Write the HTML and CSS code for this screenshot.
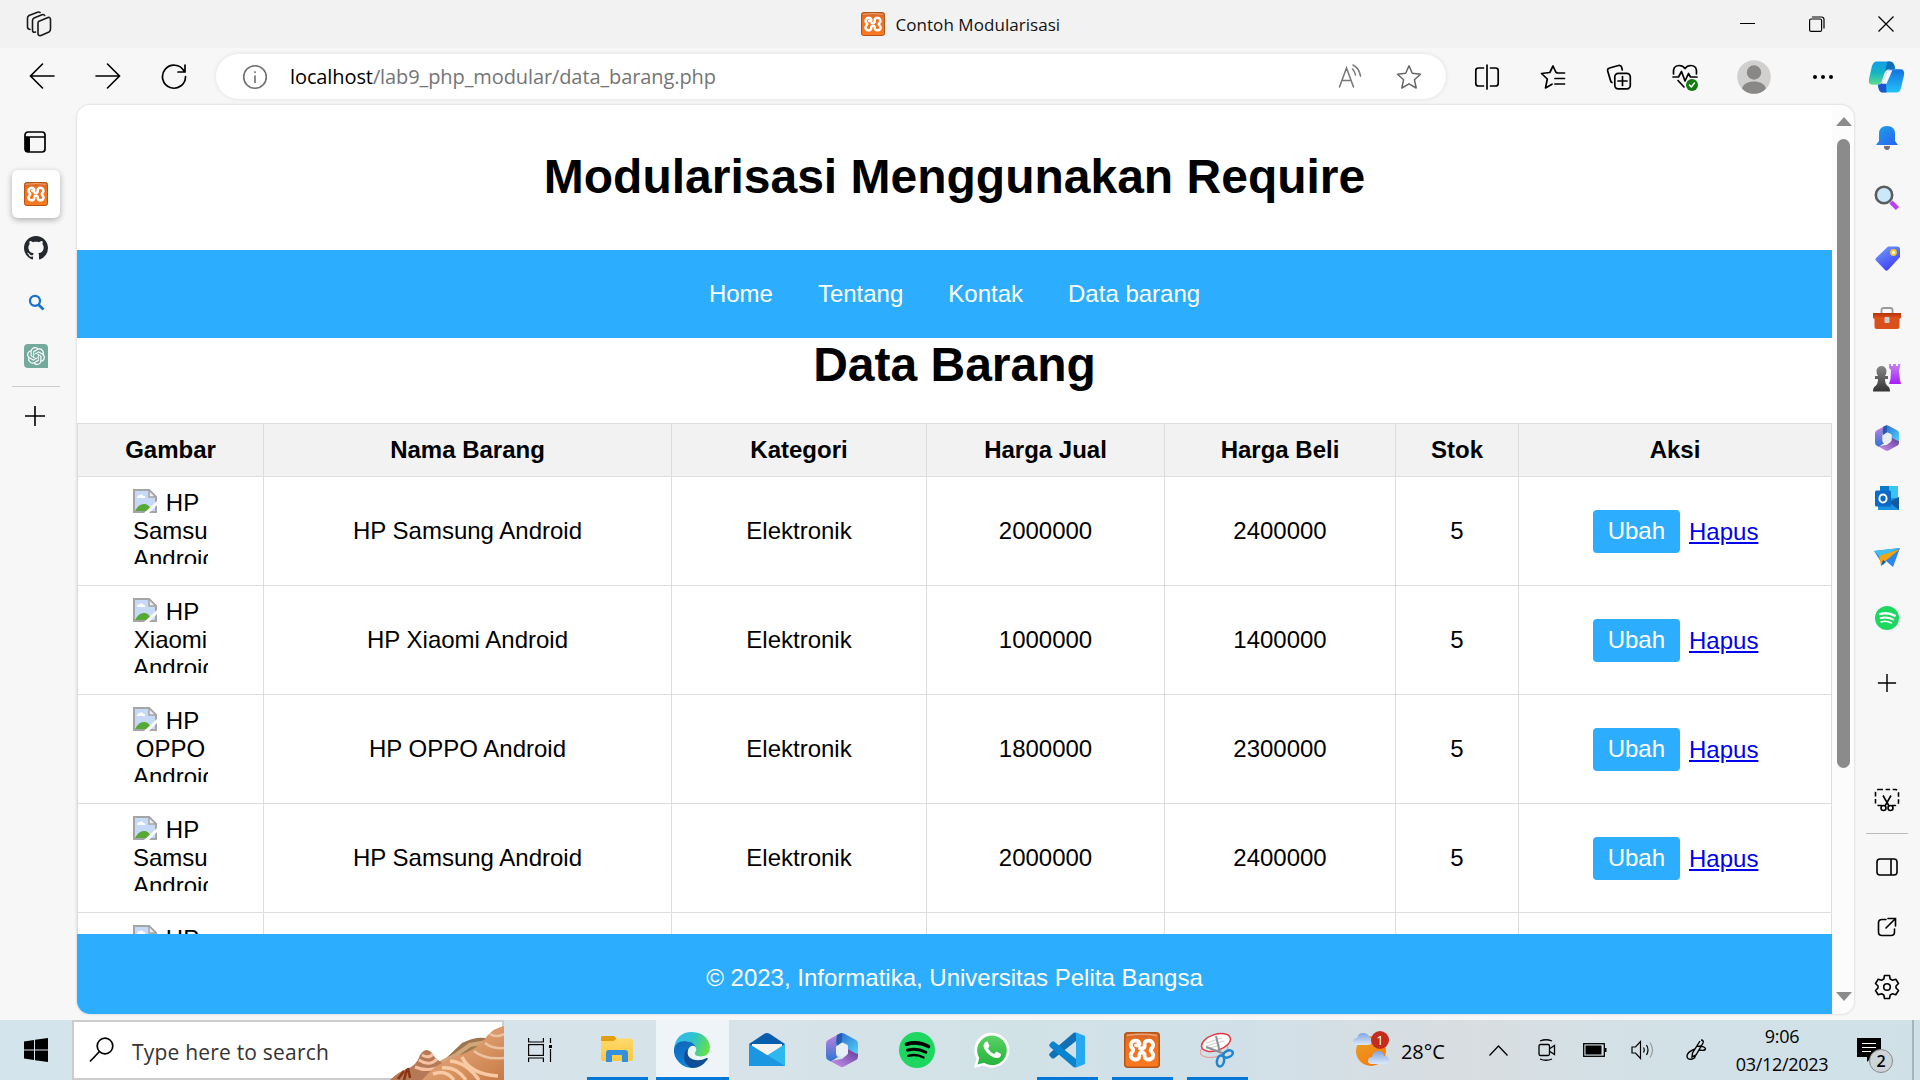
FILE: index.html
```html
<!DOCTYPE html>
<html lang="id">
<head>
<meta charset="utf-8">
<title>Contoh Modularisasi</title>
<link rel="stylesheet" href="styles.css">
</head>
<body>
<svg class="defs" width="0" height="0" aria-hidden="true">
  <defs>
    <linearGradient id="gBlue" x1="0" y1="0" x2="1" y2="1"><stop offset="0" stop-color="#1aa3e8"/><stop offset="1" stop-color="#2b61f0"/></linearGradient>
    <linearGradient id="gTag" x1="0" y1="0" x2=".6" y2="1"><stop offset="0" stop-color="#74a4fb"/><stop offset="1" stop-color="#3e3df5"/></linearGradient>
    <linearGradient id="gPurple" x1="0" y1="0" x2="0" y2="1"><stop offset="0" stop-color="#c583f5"/><stop offset="1" stop-color="#a61cf8"/></linearGradient>
    <linearGradient id="gGrey" x1="0" y1="0" x2="0" y2="1"><stop offset="0" stop-color="#888"/><stop offset="1" stop-color="#333"/></linearGradient>
    <linearGradient id="gBox" x1="0" y1="0" x2="0" y2="1"><stop offset="0" stop-color="#b53309"/><stop offset="1" stop-color="#e2581c"/></linearGradient>
    <linearGradient id="gXampp" x1="0" y1="0" x2="0" y2="1"><stop offset="0" stop-color="#d0682c"/><stop offset=".3" stop-color="#f0701e"/><stop offset="1" stop-color="#fa7a20"/></linearGradient>
    <linearGradient id="gEdgeA" x1="0" y1=".2" x2="1" y2=".5"><stop offset="0" stop-color="#35b9f0"/><stop offset=".5" stop-color="#2cc3d0"/><stop offset="1" stop-color="#66e04b"/></linearGradient>
    <linearGradient id="gEdgeB" x1="0" y1="0" x2=".4" y2="1"><stop offset="0" stop-color="#1263b4"/><stop offset="1" stop-color="#0a86df"/></linearGradient>
    <linearGradient id="gCopA" x1="0" y1="0" x2="0" y2="1"><stop offset="0" stop-color="#0f9ee8"/><stop offset=".5" stop-color="#15b5c5"/><stop offset="1" stop-color="#60dd8c"/></linearGradient>
    <linearGradient id="gCopB" x1="0" y1="0" x2="0" y2="1"><stop offset="0" stop-color="#1671de"/><stop offset="1" stop-color="#22c4fa"/></linearGradient>
    <linearGradient id="gFolder" x1="0" y1="0" x2="0" y2="1"><stop offset="0" stop-color="#ffd96b"/><stop offset="1" stop-color="#fcc740"/></linearGradient>
    <linearGradient id="gWa" x1="0" y1="0" x2="0" y2="1"><stop offset="0" stop-color="#5bd165"/><stop offset="1" stop-color="#25b43c"/></linearGradient>
    <linearGradient id="gMA" x1="0" y1="0" x2="0" y2="1"><stop offset="0" stop-color="#c17fe0"/><stop offset="1" stop-color="#2b76d2"/></linearGradient>
    <linearGradient id="gMB" x1="0" y1="0" x2="1" y2="1"><stop offset="0" stop-color="#2c62cf"/><stop offset="1" stop-color="#4fd9fb"/></linearGradient>
    <linearGradient id="gMC" x1="1" y1="0" x2="0" y2="1"><stop offset="0" stop-color="#5d3b95"/><stop offset="1" stop-color="#ce94f3"/></linearGradient>
    <linearGradient id="gSand" x1="0" y1="0" x2="1" y2="1"><stop offset="0" stop-color="#b57a55"/><stop offset=".5" stop-color="#dc9a6a"/><stop offset="1" stop-color="#c77b46"/></linearGradient>
    <linearGradient id="gSun" x1="0" y1="0" x2=".5" y2="1"><stop offset="0" stop-color="#e3a52c"/><stop offset="1" stop-color="#f97d0c"/></linearGradient>
    <linearGradient id="gCloud" x1="0" y1="0" x2="0" y2="1"><stop offset="0" stop-color="#80a5e2"/><stop offset="1" stop-color="#dbe8fa"/></linearGradient>

    <symbol id="xampp" viewBox="0 0 36 36">
      <rect x=".75" y=".75" width="34.500" height="34.500" rx="3" fill="url(#gXampp)" stroke="#b35516" stroke-width="1.500"/>
      <path d="M3 3.500Q18 1 33 3.500" fill="none" stroke="#e8a47a" stroke-width="1.500"/>
      <path d="M12 13.300H14.500C16.500 13 15.500 8.700 11.500 8.700C8 8.700 6.600 11.500 7 14C7.300 16.200 9.300 16.500 9.300 18C9.300 19.500 7 20.500 6.800 23C6.600 29 15.300 28.500 15.300 24.500C15.300 21 16 20.500 18 20.500C20 20.500 20.700 21 20.700 24.500C20.700 28.500 29.400 29 29.200 23C29 20.500 26.700 19.500 26.700 18C26.700 16.500 28.700 16.200 29 14C29.400 11.500 28 8.700 24.500 8.700C20 8.700 20.500 12 20.700 13.500C20.700 15.500 20 16.300 18 16.500H16" fill="none" stroke="#fff" stroke-width="3.800" stroke-linejoin="round" stroke-linecap="round"/>
    </symbol>
    <symbol id="m365" viewBox="0 0 32 34">
      <path d="M11 2L2 7Q0 8 0 11V23Q0 26 2 27L5 28.500L12 24Q10 23 10 20V13Z" fill="url(#gMA)"/>
      <path d="M11 2L14 .5Q16-.5 18 .5L30 7Q32 8 32 11V22L22 16V13Q22 12 20 11L16 9.500L11 13Q10 9 11 2Z" fill="url(#gMB)"/>
      <path d="M32 21V23Q32 26 30 27L18 33.500Q16 34.500 14 33.500L4 28L16 26L21 22Q22 21 22 16L29 20Z" fill="url(#gMC)"/>
      <path d="M11 2Q9 9 10.500 14L16 10V0Q13 .5 11 2Z" fill="#174a9c" opacity=".6"/>
      <path d="M16 9.500L22 13V20.500L16 24.500L10.200 21V13.500Z" fill="#e8eef5"/>
    </symbol>
    <symbol id="spot" viewBox="0 0 36 36">
      <circle cx="18" cy="18" r="18" fill="#1ed760"/>
      <g fill="none" stroke="currentColor" stroke-linecap="round"><path d="M7.500 12.200Q19 8.800 29.500 14.500" stroke-width="3.600"/><path d="M8.500 18.200Q18 15.500 26.800 20.200" stroke-width="3"/><path d="M9.300 23.800Q17.500 21.500 24.600 25.500" stroke-width="2.400"/></g>
    </symbol>
    <symbol id="broken" viewBox="0 0 24 24">
      <path d="M1 1H16L23 8V23H1Z" fill="#c6d9f6" stroke="#a5a5a5" stroke-width="2"/>
      <path d="M16 1V8H23Z" fill="#eee" stroke="#a5a5a5" stroke-width="1.500"/>
      <path d="M4 9Q4 6 7 6Q9 4 10.500 7Q13 7 12 9Z" fill="#fff"/>
      <path d="M2 22Q6 14 12 15Q17 16 18 22Z" fill="#57a936"/>
      <path d="M11 24L24 12V16L16 24Z" fill="#fff"/>
    </symbol>
    <symbol id="plus" viewBox="0 0 22 22"><path d="M11 1V21M1 11H21" stroke="#000" stroke-width="1.600"/></symbol>
  </defs>
</svg>

<div class="screen">
  <header class="titlebar">
    <svg class="work" width="26" height="26" viewBox="0 0 26 26" fill="none" stroke="#1a1a1a" stroke-width="1.600" stroke-linejoin="round" stroke-linecap="round"><path d="M12.500 10.500L22 6.500Q24.500 6 24.500 8.500V18Q24.500 20 23 21L15 24.500Q12 25 12 22.500V12Q12 11 12.500 10.500Z"/><path d="M9.500 21Q6.500 22 6.500 19V9.500Q6.500 8 8 7L16 3.700Q18 3 18.700 4.500M4 18.500Q1.500 18 1.500 16V7Q1.500 5.500 3 4.500L11.500 1.200Q13 .8 14 1.500"/></svg>
    <div class="tabtitle"><svg width="24" height="24"><use href="#xampp"/></svg><span>Contoh Modularisasi</span></div>
    <div class="winbtns">
      <svg width="16" height="16"><path d="M0 7.500H15" stroke="#000"/></svg>
      <svg width="16" height="16" fill="none" stroke="#000" stroke-width="1.200"><rect x=".6" y="3" width="12" height="12.400" rx="1.500"/><path d="M3 1H12.500Q15 1 15 3.500V12.500"/></svg>
      <svg width="16" height="16"><path d="M.5.5L15.500 15.500M15.500.5L.5 15.500" stroke="#000" stroke-width="1.200"/></svg>
    </div>
  </header>

  <div class="toolbar">
    <span class="tool"><svg width="26" height="28" viewBox="0 0 26 28" fill="none" stroke="#000" stroke-width="1.600" stroke-linecap="round"><path d="M25 13H2M13.500 1L1.500 13L13.500 25"/></svg></span>
    <span class="tool"><svg width="26" height="28" viewBox="0 0 26 28" fill="none" stroke="#000" stroke-width="1.600" stroke-linecap="round"><path d="M1 13H24M12.500 1L24.500 13L12.500 25"/></svg></span>
    <span class="tool"><svg width="26" height="26" viewBox="0 0 26 26" fill="none" stroke="#000" stroke-width="1.700" stroke-linecap="round"><path d="M23 7A11.500 11.500 0 1 0 24.500 12.500M24 1V8H17"/></svg></span>
    <div class="omnibox">
      <svg width="26" height="26" viewBox="0 0 26 26" fill="none" stroke="#6f6f6f" stroke-width="1.600"><circle cx="13" cy="13" r="11.300"/><path d="M13 11.500V19M13 7.200V9" /></svg>
      <span class="url"><b>localhost</b>/lab9_php_modular/data_barang.php</span>
      <svg width="24" height="26" viewBox="0 0 24 26" fill="none" stroke="#777" stroke-width="1.500" stroke-linecap="round"><path d="M1.500 23L8.500 4L15.500 23M4 16.500H13M14.500 5Q17 7.500 17.500 11M15 1Q21 4 22.500 12"/></svg>
      <svg class="star" width="26" height="26" viewBox="0 0 26 26" fill="none" stroke="#666" stroke-width="1.500" stroke-linejoin="round"><path d="M13 1.800L16.300 9.300L24.500 10.200L18.400 15.700L20.200 24L13 19.800L5.800 24L7.600 15.700L1.500 10.200L9.700 9.300Z"/></svg>
    </div>
    <span class="tool tool-first"><svg width="26" height="26" viewBox="0 0 26 26" fill="none" stroke="#000" stroke-width="1.700" stroke-linecap="round"><path d="M13 1V25M9.500 4H4.500Q1.800 4 1.800 6.500V19.500Q1.800 22 4.500 22H9.500M16.500 4H21.500Q24.200 4 24.200 6.500V19.500Q24.200 22 21.500 22H16.500"/></svg></span>
    <span class="tool"><svg width="26" height="26" viewBox="0 0 26 26" fill="none" stroke="#000" stroke-width="1.700" stroke-linecap="round" stroke-linejoin="round"><path d="M17 8.700L16 8.500L13 2L9.800 8.500L1.500 9.500L7.300 15L5.500 24L12 20.200M17 9H24.500M15 14.500H24.500M15 20H24.500"/></svg></span>
    <span class="tool"><svg width="26" height="26" viewBox="0 0 26 26" fill="none" stroke="#000" stroke-width="1.700" stroke-linecap="round"><rect x="8.800" y="9.300" width="15.500" height="15.500" rx="3.500"/><path d="M16.500 12.500V21.500M12 17H21M6 18.500Q4.800 18 4.500 16.500L1.700 7Q1.300 4.500 3.500 4L12.500 1.500Q15 1 15.700 3.500L16.300 6"/></svg></span>
    <span class="tool"><svg width="26" height="28" viewBox="0 0 26 28" fill="none" stroke="#000" stroke-width="1.700" stroke-linecap="round" stroke-linejoin="round"><path d="M1.500 11Q.5 2.500 7 2.500Q11 2.500 13 5.500Q15 2.500 19 2.500Q25.500 2.500 24.500 11M1 14H6.500L9.500 8.500L13 18L16.500 10.500L18.500 14H25M6 17.500L12 24"/><circle cx="20" cy="22" r="6" fill="#107c10" stroke="none"/><path d="M17.500 22L19.300 24L22.500 20" stroke="#fff" stroke-width="1.500"/></svg></span>
    <span class="tool tool-avatar"><svg width="34" height="34" viewBox="0 0 34 34"><circle cx="17" cy="17" r="16.800" fill="#d2d0ce"/><circle cx="17" cy="12.500" r="7.200" fill="#8a8886"/><path d="M5 28.500C7 19 27 19 29 28.500Q24 34 17 33.800Q10 34 5 28.500Z" fill="#8a8886"/></svg></span>
    <span class="tool"><svg width="22" height="6" fill="#000"><circle cx="3" cy="3" r="2"/><circle cx="11" cy="3" r="2"/><circle cx="19" cy="3" r="2"/></svg></span>
    <span class="tool tool-copilot"><svg width="37" height="34" viewBox="0 0 38 34"><path d="M9 1H22Q26 1 27 5L28 9H22Q18 9 17 13L14 22Q13 25 9 25H5Q0 25 1 19L4 6Q5.500 1 9 1Z" fill="url(#gCopA)"/><path d="M22 1Q26 1 27 5L28 9H22Q18 9 17 13L20 1Z" fill="#0c5fb4" opacity=".8"/><path d="M29 33H16Q12 33 11 29L10 25Q14 25 16 20L19 12Q20 9 24 9H33Q38 9 37 15L34 28Q33 33 29 33Z" fill="url(#gCopB)"/><path d="M10 25Q14 25 16 20L18 15L19 33H16Q12 33 11 29Z" fill="#1b3ec4" opacity=".8"/><path d="M20 10H25L19 24H14Z" fill="#f7f7f7"/></svg></span>
  </div>

  <div class="middle">
    <nav class="tabs">
      <span class="tabicon tabicon-first"><svg width="22" height="22" viewBox="0 0 22 22"><rect x="1" y="1" width="20" height="20" rx="3" fill="none" stroke="#000" stroke-width="1.700"/><path d="M1 6H21" stroke="#000" stroke-width="1.500"/><path d="M1 6H6V21H3Q1 21 1 18Z"/></svg></span>
      <span class="tabicon"><i class="active"><svg width="24" height="24"><use href="#xampp"/></svg></i></span>
      <span class="tabicon"><svg width="24" height="24" viewBox="0 0 16 16" fill="#24292f"><path d="M8 0C3.580 0 0 3.580 0 8c0 3.540 2.290 6.530 5.470 7.590.4.070.55-.17.55-.38 0-.19-.01-.82-.01-1.490-2.010.37-2.530-.49-2.690-.94-.09-.23-.48-.94-.82-1.130-.28-.15-.68-.52-.01-.53.63-.01 1.080.58 1.230.82.72 1.210 1.870.87 2.330.66.070-.52.28-.87.51-1.070-1.780-.2-3.640-.89-3.640-3.950 0-.87.31-1.590.82-2.150-.08-.2-.36-1.020.08-2.120 0 0 .67-.21 2.200.82.64-.18 1.320-.27 2-.27s1.360.09 2 .27c1.530-1.040 2.200-.82 2.200-.82.44 1.100.16 1.920.08 2.120.51.56.82 1.270.82 2.150 0 3.070-1.870 3.750-3.650 3.950.29.25.54.73.54 1.480 0 1.070-.01 1.930-.01 2.200 0 .21.15.46.55.38A8.010 8.010 0 0 0 16 8c0-4.420-3.580-8-8-8z"/></svg></span>
      <span class="tabicon"><svg width="17" height="17" viewBox="0 0 17 17" fill="none" stroke="#1a73cc"><circle cx="7" cy="6.800" r="5" stroke-width="2.300"/><path d="M10.300 10.500L15.500 15.500" stroke-width="2.800"/></svg></span>
      <span class="tabicon"><svg width="24" height="24" viewBox="0 0 24 24"><path d="M4 0H20Q24 0 24 4V24H4Q0 24 0 20V4Q0 0 4 0Z" fill="#74aa9c"/><path transform="translate(3 3) scale(.75)" fill="#fff" d="M22.282 9.821a5.985 5.985 0 0 0-.516-4.910 6.046 6.046 0 0 0-6.510-2.900A6.065 6.065 0 0 0 4.981 4.182a5.985 5.985 0 0 0-3.998 2.900 6.046 6.046 0 0 0 .743 7.097 5.980 5.980 0 0 0 .511 4.910 6.051 6.051 0 0 0 6.515 2.900A5.985 5.985 0 0 0 13.260 24a6.056 6.056 0 0 0 5.772-4.206 5.989 5.989 0 0 0 3.998-2.900 6.056 6.056 0 0 0-.748-7.073zM13.260 22.430a4.476 4.476 0 0 1-2.876-1.041l.142-.080 4.778-2.758a.795.795 0 0 0 .393-.681v-6.737l2.020 1.169a.071.071 0 0 1 .038.052v5.583a4.504 4.504 0 0 1-4.495 4.494zM3.600 18.304a4.471 4.471 0 0 1-.535-3.014l.142.085 4.783 2.758a.771.771 0 0 0 .781 0l5.843-3.369v2.332a.080.080 0 0 1-.033.062L9.740 19.950a4.499 4.499 0 0 1-6.141-1.646zM2.341 7.896a4.485 4.485 0 0 1 2.366-1.973V11.600a.766.766 0 0 0 .388.677l5.814 3.354-2.020 1.169a.076.076 0 0 1-.071 0l-4.830-2.787A4.504 4.504 0 0 1 2.341 7.872zm16.596 3.856L13.104 8.364 15.119 7.200a.076.076 0 0 1 .071 0l4.830 2.791a4.494 4.494 0 0 1-.677 8.104v-5.677a.790.790 0 0 0-.407-.667zm2.011-3.023l-.142-.085-4.774-2.782a.776.776 0 0 0-.785 0L9.409 9.230V6.897a.066.066 0 0 1 .028-.062l4.830-2.787a4.499 4.499 0 0 1 6.680 4.660zM8.307 12.863l-2.020-1.164a.080.080 0 0 1-.038-.057V6.074a4.499 4.499 0 0 1 7.376-3.454l-.142.081L8.704 5.459a.795.795 0 0 0-.393.681zm1.098-2.365l2.602-1.500 2.607 1.500v2.999l-2.597 1.500-2.607-1.500Z"/></svg></span>
      <hr>
      <span class="tabicon tabicon-plus"><svg width="22" height="22"><use href="#plus"/></svg></span>
    </nav>

    <div class="frame">
      <main class="page">
        <header class="pagehead"><h1>Modularisasi Menggunakan Require</h1></header>
        <nav class="menu"><a>Home</a><a>Tentang</a><a>Kontak</a><a>Data barang</a></nav>
        <section class="content">
          <h1>Data Barang</h1>
          <table>
            <colgroup><col class="c1"><col class="c2"><col class="c3"><col class="c4"><col class="c5"><col class="c6"><col class="c7"></colgroup>
            <tr><th>Gambar</th><th>Nama Barang</th><th>Kategori</th><th>Harga Jual</th><th>Harga Beli</th><th>Stok</th><th>Aksi</th></tr>
            <tr><td><div class="pic"><svg><use href="#broken"/></svg>HP Samsung Android</div></td><td>HP Samsung Android</td><td>Elektronik</td><td>2000000</td><td>2400000</td><td>5</td><td><div class="acts"><a class="btn">Ubah</a><a class="link">Hapus</a></div></td></tr>
            <tr><td><div class="pic"><svg><use href="#broken"/></svg>HP Xiaomi Android</div></td><td>HP Xiaomi Android</td><td>Elektronik</td><td>1000000</td><td>1400000</td><td>5</td><td><div class="acts"><a class="btn">Ubah</a><a class="link">Hapus</a></div></td></tr>
            <tr><td><div class="pic"><svg><use href="#broken"/></svg>HP OPPO Android</div></td><td>HP OPPO Android</td><td>Elektronik</td><td>1800000</td><td>2300000</td><td>5</td><td><div class="acts"><a class="btn">Ubah</a><a class="link">Hapus</a></div></td></tr>
            <tr><td><div class="pic"><svg><use href="#broken"/></svg>HP Samsung Android</div></td><td>HP Samsung Android</td><td>Elektronik</td><td>2000000</td><td>2400000</td><td>5</td><td><div class="acts"><a class="btn">Ubah</a><a class="link">Hapus</a></div></td></tr>
            <tr><td><div class="pic"><svg><use href="#broken"/></svg>HP</div></td><td></td><td></td><td></td><td></td><td></td><td></td></tr>
          </table>
        </section>
        <footer class="pagefoot">© 2023, Informatika, Universitas Pelita Bangsa</footer>
      </main>
      <div class="scroll">
        <svg width="16" height="9"><path d="M0 9L8 0L16 9Z" fill="#8b8b8b"/></svg>
        <div class="thumb"></div>
        <svg width="16" height="9"><path d="M0 0H16L8 9Z" fill="#8b8b8b"/></svg>
      </div>
    </div>

    <aside class="side">
      <span><svg width="22" height="26" viewBox="0 0 22 26"><path d="M8 21H14Q14 25 11 25Q8 25 8 21Z" fill="#6f6f74"/><path d="M3 16V9Q3 1 11 1Q19 1 19 9V16L22 20H0Z" fill="url(#gBlue)"/></svg></span>
      <span><svg width="26" height="26" viewBox="0 0 26 26"><path d="M17 17L23.500 23.500" stroke="#bb3df5" stroke-width="4.500"/><circle cx="10" cy="10" r="8.200" fill="#c9e8fb" stroke="#5c5c5c" stroke-width="2.600"/></svg></span>
      <span><svg width="25" height="25" viewBox="0 0 25 25"><path d="M13 0.500H22Q25 .5 25 3.500V11L13 24Q11.500 25.500 10 24L1 14.500Q0 13 1 12Z" fill="url(#gTag)"/><circle cx="18.500" cy="6.500" r="2.500" fill="#fff" stroke="#f5cc1c" stroke-width="1.800"/></svg></span>
      <span><svg width="28" height="22" viewBox="0 0 28 22"><path d="M8.500 6V3Q8.500 1 10.500 1H17.500Q19.500 1 19.500 3V6" fill="none" stroke="#999" stroke-width="1.800"/><path d="M1.500 10H26.500V19.500Q26.500 22 24 22H4Q1.500 22 1.500 19.500Z" fill="#d9501a"/><path d="M0 6H28V11L26.500 12H1.500L0 11Z" fill="url(#gBox)"/><rect x="11.500" y="10" width="5" height="6" rx="1" fill="#ccc"/></svg></span>
      <span><svg width="28" height="28" viewBox="0 0 28 28"><path d="M16 0H18V2H20V0H23V2H25V0H27.500L26 7L27 16L28 20H16L17.500 15L18 6L16 4Z" fill="url(#gPurple)"/><path d="M3.500 7A5 5 0 0 1 13.500 7Q13.500 10 12 12H15V15H12Q12 20 14.500 22Q17 23 17 27.500H0Q0 23 2.500 22Q5 20 5 15H2V12H5Q3.500 10 3.500 7Z" fill="url(#gGrey)"/></svg></span>
      <span><svg width="24" height="26"><use href="#m365"/></svg></span>
      <span><svg width="24" height="24" viewBox="0 0 24 24"><path d="M5 0H23V12H5Z" fill="#38c4f5"/><path d="M5 0H14V6H5Z" fill="#0b7acb"/><path d="M3 12H24V24H3Z" fill="#1992df"/><path d="M24 11V24L14 16Z" fill="#12599f"/><rect y="4.500" width="16" height="16" rx="1.500" fill="#0a6ac8"/><ellipse cx="8" cy="12.500" rx="3.600" ry="4" fill="none" stroke="#fff" stroke-width="1.900"/></svg></span>
      <span><svg width="26" height="20" viewBox="0 0 26 20"><path d="M0 3L26 0L19 19L12 13L9 17Z" fill="#2b87f0"/><path d="M0 3L26 0L6 9Z" fill="#3fc0f0"/><path d="M5 8L26 1L9 15L7 18Z" fill="#f3a50c"/><path d="M7 18L9 12L12 14Z" fill="#105fbf"/></svg></span>
      <span><svg class="on-green" width="24" height="24"><use href="#spot"/></svg></span>
      <span class="side-plus"><svg width="20" height="20"><use href="#plus"/></svg></span>
      <div class="gap"></div>
      <span><svg width="26" height="24" viewBox="0 0 26 24" fill="none" stroke="#000" stroke-width="1.600"><rect x="1.500" y="1.500" width="23" height="16" rx="3" stroke-dasharray="4.500 2.600"/><path d="M8 15H18V20H8Z" fill="#f7f7f7" stroke="none"/><path d="M9 7.500L15 18M17 7.500L11 18"/><circle cx="9.500" cy="20" r="2.500"/><circle cx="16.500" cy="20" r="2.500"/></svg></span>
      <hr>
      <span><svg width="22" height="18" viewBox="0 0 22 18" fill="none" stroke="#000" stroke-width="1.600"><rect x="1" y="1" width="20" height="16" rx="3"/><path d="M15 1V17"/></svg></span>
      <span><svg width="20" height="20" viewBox="0 0 20 20" fill="none" stroke="#000" stroke-width="1.600" stroke-linecap="round"><path d="M9 2.500H5Q1.500 2.500 1.500 6V15Q1.500 18.500 5 18.500H14Q17.500 18.500 17.500 15V12M11 1.500H18.500V9M18 2L9 11"/></svg></span>
      <span><svg width="26" height="26" viewBox="0 0 26 26" fill="none" stroke="#000" stroke-width="1.600" stroke-linejoin="round"><path d="M10.500 1.500H15.500L16.200 5L18.500 6.300L21.800 5.200L24.500 9.500L22 12V14L24.500 16.500L21.800 20.800L18.500 19.700L16.200 21L15.500 24.500H10.500L9.800 21L7.500 19.700L4.200 20.800L1.500 16.500L4 14V12L1.500 9.500L4.200 5.200L7.500 6.300L9.800 5Z"/><circle cx="13" cy="13" r="3.300"/></svg></span>
    </aside>
  </div>

  <div class="taskbar">
    <span class="start"><svg width="24" height="24" viewBox="0 0 24 24"><path d="M0 3.500L10 2V11.500H0ZM11 1.800L24 0V11.500H11ZM0 12.500H10V22L0 20.500ZM11 12.500H24V24L11 22.200Z"/></svg></span>
    <div class="search">
      <svg width="26" height="26" viewBox="0 0 26 26" fill="none" stroke="#000" stroke-width="1.700"><circle cx="16" cy="9" r="7.800"/><path d="M10.500 14.500L1 24.500"/></svg>
      <span>Type here to search</span>
      <svg class="art" width="114" height="54" viewBox="0 0 114 54">
        <path d="M28 48L54 34L72 17Q88 9 99 13L110 12V54H28Z" fill="#9d7650"/>
        <path d="M44 40L66 29L80 19L97 16" fill="none" stroke="#d1a77a" stroke-width="4"/>
        <path d="M0 54Q8 46 17 43Q27 39 30 29Q36 20 42 27Q46 35 56 38L70 54Z" fill="#b57958"/>
        <path d="M25 41Q39 47 53 39M29 34Q40 41 47 33M32 29Q39 33 43 28" fill="none" stroke="#f6c2a2" stroke-width="3"/>
        <path d="M32 54Q46 37 66 30Q88 24 97 10Q104 2 114 0V54Z" fill="url(#gSand)"/>
        <path d="M43 48Q56 43 64 54M52 42Q66 40 76 54M60 35Q76 36 89 54M72 31Q80 48 108 50" fill="none" stroke="#f7c9a4" stroke-width="3.500"/>
        <path d="M84 25Q95 34 114 32M95 17Q102 23 114 22M100 8Q106 12 114 8" fill="none" stroke="#ecc3a1" stroke-width="2.500"/>
        <path d="M8 53L14 45M14 54L17 43M20 52L18 42" stroke="#8a3513" stroke-width="2.500"/>
      </svg>
    </div>
    <span class="tview"><svg width="24" height="24" viewBox="0 0 24 24" fill="none" stroke="#000" stroke-width="1.200"><path d="M.6 0V4H15.400V0M.6 24V20H15.400V24M22.500 0V5M22.500 11V24"/><rect x=".6" y="6.600" width="14.800" height="10.800"/><path d="M21 7H24V10H21Z" fill="#000" stroke="none"/></svg></span>
    <span class="app run"><svg width="32" height="28" viewBox="0 0 32 28"><path d="M0 1.500Q0 0 1.500 0H13L16 3L13 6H0Z" fill="#e09f0e"/><path d="M0 5H13L15.500 2.500H30Q32 2.500 32 4.500V23Q32 25 30 25H2Q0 25 0 23Z" fill="url(#gFolder)"/><path d="M5 26V17Q5 14 8 14H24Q27 14 27 17V26H21V19H11V26Z" fill="#3390dc"/></svg></span>
    <span class="app run current"><svg width="36" height="36" viewBox="0 0 36 36"><path d="M0 17Q2 0 18 0Q34 1 36 15Q36 24 27 24.500Q20 24 21 21Q23 18 22 16Q19 9 11 9Q3 10 0 17Z" fill="url(#gEdgeA)"/><path d="M0 17Q2 9 11 9Q19 9 22 15Q18 12 15 16Q11 22 15 29Q19 35 27 33Q17 39 8 33Q-1 26 0 17Z" fill="url(#gEdgeB)"/><path d="M14 17Q12 25 19 27.500Q26 29.500 32.500 26Q35 26 33 28Q27 36 19 36Q10 34 10 25Q10 19 14 17Z" fill="#104f98"/></svg></span>
    <span class="app"><svg width="36" height="34" viewBox="0 0 36 34"><path d="M0 11L15 1Q18-1 21 1L36 11V18H0Z" fill="#0a5cad"/><path d="M3 11H33V16L18 24L3 16Z" fill="#f5f3f2"/><path d="M0 11L18 22.500L36 11V33H0Z" fill="#2fb7ef"/><path d="M0 11L36 33H0Z" fill="#1b96e0"/></svg></span>
    <span class="app"><svg width="32" height="34"><use href="#m365"/></svg></span>
    <span class="app"><svg class="on-black" width="36" height="36"><use href="#spot"/></svg></span>
    <span class="app"><svg width="36" height="36" viewBox="0 0 36 36"><path d="M0 36L2.500 26.500A17.500 17.500 0 1 1 9.500 33.500Z" fill="#fff"/><path d="M3.500 32.500L5.300 26A14.800 14.800 0 1 1 10 30.800Z" fill="url(#gWa)"/><path d="M12.500 9.500Q10 10 9.500 14Q10 18 15 22.500Q20 26.500 24 26Q27 25 27 22L22.500 19.500L20 22Q16 20.500 14 16.500L15.500 14L13.800 10Z" fill="#fff"/></svg></span>
    <span class="app run"><svg width="36" height="36" viewBox="0 0 36 36"><path d="M0 23L3 26.500H5L27 9V1L25 .5L1 21Z" fill="#1070b5"/><path d="M0 13L3 9.500H5L27 27V35L25 35.500L1 15Z" fill="#0a83cf"/><path d="M26 0L36 4V32L26 36Q27 35 27 33V3Q27 1 26 0Z" fill="#27a9f2"/></svg></span>
    <span class="app run"><svg width="36" height="36"><use href="#xampp"/></svg></span>
    <span class="app run"><svg width="34" height="36" viewBox="0 0 34 36" fill="none"><ellipse cx="14" cy="18" rx="14" ry="7" stroke="#eaa0a0" stroke-width="1.300" transform="rotate(-12 14 18)"/><ellipse cx="16" cy="10.500" rx="15" ry="8" fill="#fff" stroke="#e2363c" stroke-width="1.500" transform="rotate(-18 16 10.500)"/><path d="M6 11L22 6M6 14L24 9M10 16L20 13" stroke="#ccc"/><path d="M16 4L20 21M6 15L25 22" stroke="#8b9299" stroke-width="2"/><ellipse cx="28" cy="22" rx="5" ry="3.300" stroke="#1f85d0" stroke-width="2.500" transform="rotate(-25 28 22)"/><ellipse cx="20.500" cy="29" rx="3.500" ry="5.500" stroke="#1f85d0" stroke-width="2.500" transform="rotate(12 20.500 29)"/></svg></span>
    <div class="tray">
      <div class="weather"><svg width="36" height="36" viewBox="0 0 36 36"><circle cx="18" cy="19" r="15" fill="url(#gSun)"/><path d="M4 13Q0 13 0 9.500Q0 6 4 6Q5 1 10 1Q15 1 16 5Q20 6 19 10Q18 13 15 13Z" fill="url(#gCloud)"/><path d="M19 32Q15 32 15 29Q15 25 19 25Q20 19 25 19Q30 19 31 24Q36 24 36 28Q36 32 32 32Z" fill="url(#gCloud)"/></svg><i>1</i></div>
      <span class="temp">28°C</span>
      <svg class="chev" width="19" height="11" viewBox="0 0 19 11" fill="none" stroke="#000" stroke-width="1.300"><path d="M.5 10.500L9.500 1L18.500 10.500"/></svg>
      <svg class="cam" width="18" height="22" viewBox="0 0 18 22" fill="none" stroke="#000" stroke-width="1.300"><rect x="1" y="5.500" width="10.500" height="11" rx="1.500"/><path d="M12 9.500L16.500 6.500V15.500L12 12.500M2 2Q8-.5 14 2M2 20Q8 22.500 14 20"/></svg>
      <svg class="bat" width="24" height="14" viewBox="0 0 24 14"><rect x=".7" y=".7" width="20.600" height="12.600" fill="none" stroke="#000" stroke-width="1.300"/><rect x="2.500" y="2.500" width="16" height="9"/><rect x="22" y="5" width="1.500" height="4"/></svg>
      <svg class="vol" width="24" height="20" viewBox="0 0 24 20" fill="none" stroke="#000" stroke-width="1.200"><path d="M1 7H4.500L9.500 1.500V18.500L4.500 13H1ZM12.500 7.500Q14 10 12.500 12.500M15.500 5Q18.500 10 15.500 15"/><path d="M19 2.500Q24 10 19 17.500" stroke="#999"/></svg>
      <svg class="pen" width="21" height="22" viewBox="0 0 21 22" fill="none" stroke="#000" stroke-width="1.400"><path d="M15 1Q18 1 17 4L10 16L6 18L6.500 14L14 2M11 7Q19 7 19.500 10Q19 12 13 11M9 10Q1 13 1 17Q1 21 6 20Q10 19 9 16"/></svg>
      <div class="clock"><span>9:06</span><span>03/12/2023</span></div>
      <div class="notif"><svg width="24" height="24" viewBox="0 0 24 24"><path d="M0 0H24V19H15L10 24V19H0Z"/><path d="M5 5.500H19M5 9.500H19M5 13.500H14" stroke="#fff" stroke-width="1.200"/></svg><i>2</i></div>
      <div class="desk"></div>
    </div>
  </div>
</div>
</body>
</html>
```
FILE: styles.css
```css
* { box-sizing: border-box; }
body { margin: 0; overflow: hidden; }
svg { display: block; flex: none; }
.defs { position: absolute; }
.screen { width: 1920px; height: 1080px; display: flex; flex-direction: column; background: #f7f7f7; font-family: "Open Sans", "Noto Sans", sans-serif; }

.titlebar { height: 48px; flex: none; background: #f2f2f2; display: grid; grid-template-columns: 1fr auto 1fr; align-items: center; padding: 0 26px 0 26px; }
.tabtitle { display: flex; align-items: center; gap: 11px; height: 48px; font-size: 17px; color: #111; }
.tabtitle svg { margin-bottom: 1px; }
.tabtitle span { width: 164px; white-space: nowrap; letter-spacing: .05px; padding-top: 1px; }
.winbtns { display: flex; justify-content: flex-end; gap: 53px; }

.toolbar { height: 56px; flex: none; display: flex; align-items: center; padding: 1px 0 0 9px; }
.tool { width: 66px; display: flex; justify-content: center; flex: none; }
.tool-first { margin-left: 8px; }
.tool-avatar { width: 72px; }
.tool-copilot { width: 61px; }
.omnibox { flex: none; width: 1230px; height: 45px; margin-left: 9px; padding: 0 24px 0 26px; background: #fff; border-radius: 23px; box-shadow: 0 0 5px rgba(0,0,0,.1); display: flex; align-items: center; }
.url { flex: 1; margin-left: 22px; font-size: 20px; color: #757575; letter-spacing: -.1px; white-space: nowrap; }
.url b { color: #000; font-weight: 400; }
.star { margin-left: 34px; }

.middle { flex: 1; min-height: 0; display: flex; }
.tabs { width: 77px; flex: none; padding-top: 12px; }
.tabicon { display: flex; width: 72px; height: 54px; align-items: center; justify-content: center; }
.tabicon-first { height: 51px; width: 69px; }
.tabicon-plus { width: 70px; height: 58px; }
.active { width: 48px; height: 48px; background: #fff; border-radius: 6px; box-shadow: 0 2px 6px rgba(0,0,0,.3); display: flex; align-items: center; justify-content: center; }
.tabs hr { width: 48px; margin: 3px 0 0 12px; border: 0; border-top: 1px solid #ccc; }

.frame { width: 1777px; height: 909px; margin-top: 1px; flex: none; display: flex; background: #fcfcfc; border-radius: 13px; overflow: hidden; box-shadow: 0 0 2px 1px rgba(0,0,0,.09); }
.page { width: 1755px; height: 909px; flex: none; overflow: hidden; display: flex; flex-direction: column; background: #fff; font: 24px/28px "Liberation Sans", Arial, sans-serif; color: #000; }
.page h1 { margin: 0; font-size: 48px; line-height: 53px; text-align: center; }
.pagehead { height: 145px; padding-top: 45px; flex: none; }
.menu { height: 88px; flex: none; background: #2dadfe; color: #fff; display: flex; justify-content: center; align-items: center; gap: 45px; }
.content { flex: 1; min-height: 0; overflow: hidden; }
.content table { margin-top: 32px; width: 1755px; table-layout: fixed; border-collapse: collapse; text-align: center; }
.c1 { width: 186px; } .c2 { width: 408px; } .c3 { width: 255px; } .c4 { width: 238px; } .c5 { width: 231px; } .c6 { width: 123px; } .c7 { width: 313px; }
th, td { border: 1px solid #ddd; padding: 0; }
th { height: 53px; background: #f2f2f2; }
td { height: 109px; }
.pic { width: 75px; height: 75px; overflow: hidden; margin: -9px auto 0; }
.pic svg { float: left; width: 24px; height: 24px; }
.acts { display: flex; justify-content: center; align-items: center; gap: 9px; padding-left: 1px; }
.btn { background: #2dadfe; color: #fff; border-radius: 4px; padding: 7px 15px 8px; }
.link { color: #00e; text-decoration: underline; padding-top: 2px; }
.pagefoot { height: 80px; flex: none; background: #2dadfe; color: #fff; text-align: center; padding-top: 30px; }
.scroll { width: 22px; display: flex; flex-direction: column; align-items: center; padding: 12px 0 13px 1px; }
.thumb { width: 13px; height: 629px; border-radius: 7px; background: #8b8b8b; margin: 13px 0 auto; }

.side { width: 66px; display: flex; flex-direction: column; padding-top: 4px; }
.side span { height: 60px; flex: none; display: flex; align-items: center; justify-content: center; }
.side .side-plus { height: 70px; }
.gap { height: 52px; flex: none; }
.side hr { width: 42px; margin: 3px 0 3px 12px; border: 0; border-top: 1px solid #bbb; }
.on-green { color: #fff; }
.on-black { color: #000; }

.taskbar { height: 60px; flex: none; display: flex; background: linear-gradient(90deg, #d4e4ec, #d7e3e9 40%, #d1e2e7 52%, #d1e0e8 65%, #d8dde0 76%, #d3e1e7 85%, #cfe1e7); }
.start { width: 72px; display: flex; align-items: center; justify-content: center; }
.search { width: 432px; background: #fff; border: 2px solid #ccc; display: flex; align-items: center; padding-left: 15px; position: relative; }
.search span { margin-left: 17px; font-size: 21px; color: #333; white-space: nowrap; padding-top: 3px; letter-spacing: .2px; }
.art { position: absolute; right: -2px; bottom: -2px; }
.tview { width: 76px; display: flex; align-items: center; padding-left: 24px; }
.app { width: 75px; display: flex; align-items: center; justify-content: center; padding-right: 2px; position: relative; }
.run::after { content: ""; position: absolute; left: 7px; width: 61px; bottom: 0; height: 3px; background: #0078d7; }
.current { background: linear-gradient(#eef4f7, #eef4f7) 1px 0 / 73px 60px no-repeat; }
.current::after { left: 1px; width: 73px; }
.tray { flex: 1; display: flex; align-items: center; padding-left: 98px; }
.weather { position: relative; margin-top: 0; }
.weather i { position: absolute; left: 18px; top: -1px; width: 18px; height: 18px; border-radius: 50%; background: #c42b1c; color: #fff; font: 13px/18px "Open Sans", sans-serif; text-align: center; }
.temp { width: 43px; margin-left: 12px; font-size: 20px; white-space: nowrap; letter-spacing: -.1px; padding-top: 2px; }
.chev { margin-left: 45px; }
.cam { margin-left: 30px; }
.bat { margin-left: 27px; }
.vol { margin-left: 24px; }
.pen { margin-left: 31px; }
.clock { width: 100px; margin-left: 25px; display: flex; flex-direction: column; align-items: center; font-size: 18px; line-height: 28px; letter-spacing: -.3px; }
.notif { position: relative; margin-left: 25px; }
.notif i { position: absolute; left: 12px; top: 11px; width: 24px; height: 24px; border: 1px solid #888; border-radius: 50%; background: #ccd4d8; font: 600 16px/22px "Open Sans", sans-serif; text-align: center; }
.desk { margin-left: auto; width: 8px; height: 60px; border-left: 2px solid #a8b4bc; }
```
